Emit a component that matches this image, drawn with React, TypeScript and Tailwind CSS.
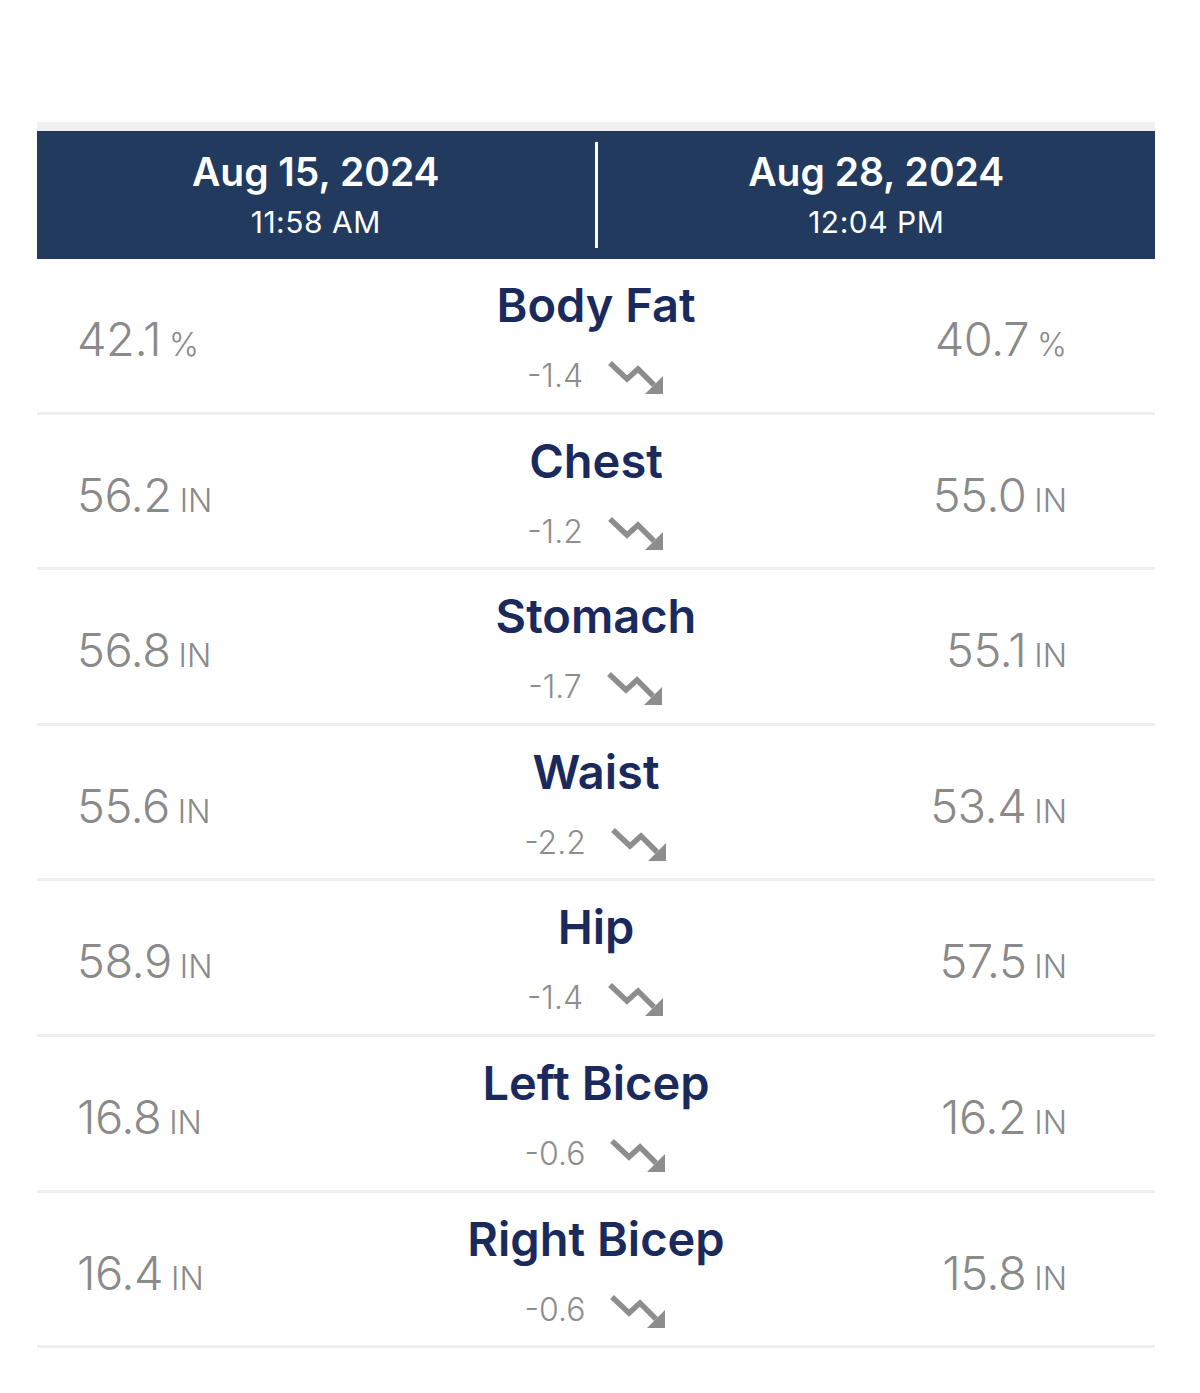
import React from "react";

type Row = { label: string; before: string; after: string; unit: string; delta: string };

const rows: Row[] = [
  { label: "Body Fat", before: "42.1", after: "40.7", unit: "%", delta: "-1.4" },
  { label: "Chest", before: "56.2", after: "55.0", unit: "IN", delta: "-1.2" },
  { label: "Stomach", before: "56.8", after: "55.1", unit: "IN", delta: "-1.7" },
  { label: "Waist", before: "55.6", after: "53.4", unit: "IN", delta: "-2.2" },
  { label: "Hip", before: "58.9", after: "57.5", unit: "IN", delta: "-1.4" },
  { label: "Left Bicep", before: "16.8", after: "16.2", unit: "IN", delta: "-0.6" },
  { label: "Right Bicep", before: "16.4", after: "15.8", unit: "IN", delta: "-0.6" },
];

function TrendDown() {
  return (
    <svg width="58" height="36" viewBox="0 0 58 36" fill="none" className="shrink-0">
      <polyline
        points="3,5 20,21 31,11 47,27"
        stroke="#8d8d8d"
        strokeWidth="5.5"
        strokeLinejoin="miter"
        strokeLinecap="butt"
      />
      <polygon points="56,36 56,18 38,36" fill="#8d8d8d" />
    </svg>
  );
}

function Value({ value, unit }: { value: string; unit: string }) {
  return (
    <span className="inline-flex items-baseline text-[#8a8a8a]">
      <span className="text-[47px] font-light tracking-[-0.5px]">{value}</span>
      <span className="ml-[8px] text-[32px] font-light">{unit}</span>
    </span>
  );
}

export default function App() {
  return (
    <div className="min-h-[1393px] bg-white pt-[122px] px-[37px]" style={{ fontFamily: "Inter, 'Noto Sans', sans-serif" }}>
      <div className="w-[1118px]">
        <div className="h-[9px] bg-[#f0f0f0]" />

        {/* dates header */}
        <div className="flex h-[128px] items-stretch bg-[#213a5d] text-white">
          <div className="flex flex-1 flex-col items-center pt-[17px]">
            <span className="text-[39px] font-semibold leading-[48px]">Aug 15, 2024</span>
            <span className="mt-[9px] text-[30px] leading-[34px] tracking-[0.5px]">11:58 AM</span>
          </div>
          <div className="my-[11px] w-[3px] bg-white" />
          <div className="flex flex-1 flex-col items-center pt-[17px]">
            <span className="text-[39px] font-semibold leading-[48px]">Aug 28, 2024</span>
            <span className="mt-[9px] text-[30px] leading-[34px] tracking-[0.5px]">12:04 PM</span>
          </div>
        </div>

        {rows.map((r) => (
          <div
            key={r.label}
            className="grid h-[155.6px] grid-cols-[1fr_auto_1fr] items-center border-b-[3px] border-[#eeeeee]"
          >
            <div className="pl-[40px] pt-[8px]">
              <Value value={r.before} unit={r.unit} />
            </div>
            <div className="flex flex-col items-center self-start pt-[18px]">
              <span className="text-[47px] font-semibold leading-[56px] text-[#1b2a5c]">{r.label}</span>
              <div className="mt-[24px] flex items-center gap-[24px]">
                <span className="text-[32px] font-light leading-[38px] text-[#8d8d8d]">{r.delta}</span>
                <TrendDown />
              </div>
            </div>
            <div className="flex justify-end pr-[88px] pt-[8px]">
              <Value value={r.after} unit={r.unit} />
            </div>
          </div>
        ))}
      </div>
    </div>
  );
}
